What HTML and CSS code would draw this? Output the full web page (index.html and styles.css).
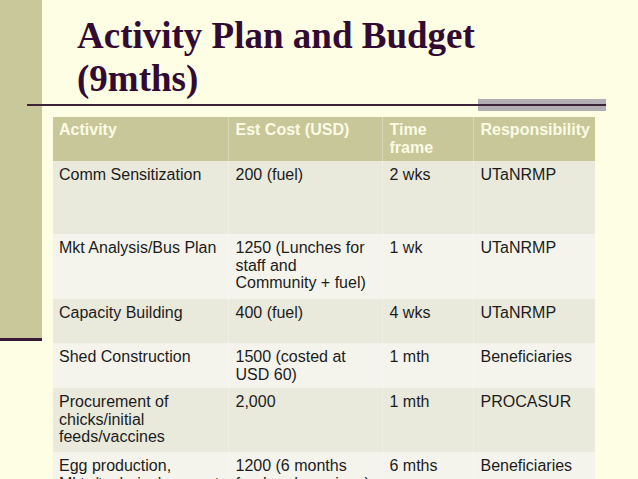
FILE: index.html
```html
<!DOCTYPE html>
<html lang="en">
<head>
<meta charset="utf-8">
<title>Activity Plan and Budget</title>
<link rel="stylesheet" href="styles.css">
</head>
<body>
<div class="slide">
  <aside class="sidebar"></aside>
  <main class="content">
    <h1 class="title">Activity Plan and Budget<br>(9mths)</h1>
    <div class="rule">
      <div class="rule-bar"></div>
      <div class="rule-line"></div>
    </div>
    <table class="plan">
      <colgroup>
        <col class="c1"><col class="c2"><col class="c3"><col class="c4">
      </colgroup>
      <thead>
        <tr class="h44">
          <th>Activity</th>
          <th>Est Cost (USD)</th>
          <th>Time frame</th>
          <th>Responsibility</th>
        </tr>
      </thead>
      <tbody>
        <tr class="odd h73">
          <td>Comm Sensitization</td>
          <td>200 (fuel)</td>
          <td>2 wks</td>
          <td>UTaNRMP</td>
        </tr>
        <tr class="even h65">
          <td>Mkt Analysis/Bus Plan</td>
          <td>1250 (Lunches for staff and Community + fuel)</td>
          <td>1 wk</td>
          <td>UTaNRMP</td>
        </tr>
        <tr class="odd h44">
          <td>Capacity Building</td>
          <td>400 (fuel)</td>
          <td>4 wks</td>
          <td>UTaNRMP</td>
        </tr>
        <tr class="even h45">
          <td>Shed Construction</td>
          <td>1500 (costed at USD 60)</td>
          <td>1 mth</td>
          <td>Beneficiaries</td>
        </tr>
        <tr class="odd h64">
          <td>Procurement of chicks/initial feeds/vaccines</td>
          <td>2,000</td>
          <td>1 mth</td>
          <td>PROCASUR</td>
        </tr>
        <tr class="even h64">
          <td>Egg production, Mktg/technical support</td>
          <td>1200 (6 months feed and vaccines)</td>
          <td>6 mths</td>
          <td>Beneficiaries</td>
        </tr>
      </tbody>
    </table>
  </main>
</div>
</body>
</html>
```

FILE: styles.css
```css
html, body {
  margin: 0;
  padding: 0;
}
body {
  background: #fefee5;
  width: 638px;
  height: 479px;
  overflow: hidden;
}
.slide {
  display: flex;
  align-items: flex-start;
  width: 638px;
  height: 479px;
  overflow: hidden;
}
.sidebar {
  flex: 0 0 42px;
  height: 338px;
  background: #c8c89b;
  border-bottom: 3px solid #3a1836;
}
.content {
  flex: 1;
  display: flex;
  flex-direction: column;
  align-items: flex-start;
}
.title {
  margin: 14px 0 0 35px;
  font-family: "Liberation Serif", "Times New Roman", serif;
  font-weight: bold;
  font-size: 37px;
  line-height: 43px;
  color: #320b33;
}
.rule {
  display: grid;
  margin: -1px 0 0 -15px;
  width: 579px;
  height: 12px;
}
.rule-bar,
.rule-line {
  grid-area: 1 / 1;
}
.rule-bar {
  justify-self: end;
  width: 128px;
  height: 12px;
  background: #b2aeb3;
}
.rule-line {
  align-self: center;
  height: 2px;
  background: #3f2338;
}
.plan {
  margin: 6px 0 0 11px;
  width: 542px;
  border-collapse: collapse;
  table-layout: fixed;
  font-family: "Liberation Sans", Arial, sans-serif;
  font-size: 16px;
  line-height: 17.5px;
  color: #1c1c1c;
}
.c1 { width: 175px; }
.c2 { width: 154px; }
.c3 { width: 91px; }
.c4 { width: 122px; }
.plan th,
.plan td {
  text-align: left;
  vertical-align: top;
  padding: 5px 6px 3px 7px;
}
.plan th + th,
.plan td + td {
  border-left: 1px solid rgba(255, 255, 255, 0.3);
}
.plan thead tr {
  background: #c7c79a;
}
.plan th {
  padding-top: 4px;
  font-weight: bold;
  color: #fbfbe4;
}
.plan td:first-child,
.plan th:first-child {
  padding-left: 6px;
}
.odd { background: #e9e9dc; }
.even { background: #f4f4ec; }
.h44 { height: 44px; }
.h45 { height: 45px; }
.h64 { height: 64px; }
.h65 { height: 65px; }
.h73 { height: 73px; }
```
